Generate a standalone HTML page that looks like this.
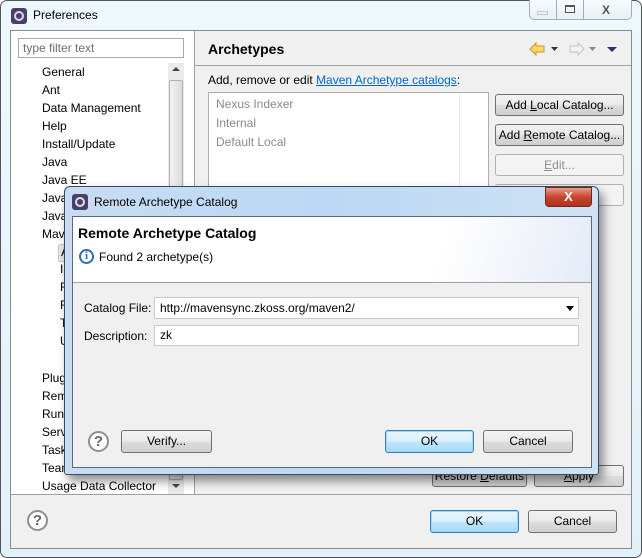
<!DOCTYPE html>
<html><head><style>
*{box-sizing:border-box;margin:0;padding:0}
body{width:642px;height:558px;position:relative;overflow:hidden;background:#fff;font-family:"Liberation Sans",sans-serif;font-size:12px;color:#000}
.a{position:absolute}
.btn{position:absolute;border:1px solid #707070;border-radius:3px;background:linear-gradient(#f2f2f2 0%,#ebebeb 48%,#dddddd 52%,#cfcfcf 100%);text-align:center;line-height:20px;font-size:12px}
.btnd{border-color:#adb2b5;color:#8d8d8d;background:#f4f4f4}
.btnok{border-color:#3c7fb1;background:linear-gradient(#eaf6fd 0%,#d9f0fc 48%,#bee6fd 52%,#a7d9f5 100%);box-shadow:inset 0 0 0 1px #9fd6f3}
.help{position:absolute;width:21px;height:21px;border:2px solid #8a8f98;border-radius:50%;text-align:center;font-weight:bold;font-size:15px;line-height:17px;color:#666;background:#fff}
.ti{position:absolute;left:42px}
.t2{position:absolute;left:60px}
</style></head><body>
<div class="a" style="left:0;top:0;width:642px;height:558px;border:1px solid #555;border-radius:7px;background:linear-gradient(#eef9fd,#e2f1f8)"></div>
<div class="a" style="left:11px;top:8px;width:16px;height:16px;border-radius:3px;background:#4a3f6b"><div class="a" style="left:3px;top:3px;width:10px;height:10px;border-radius:50%;border:2px solid #ddd"></div></div>
<div class="a" style="left:33px;top:8px;font-size:12px">Preferences</div>
<div class="a" style="left:529px;top:0;width:103px;height:20px;border:1px solid #a0aeb8;border-top:none;border-radius:0 0 5px 5px;background:linear-gradient(#f8fcfe,#e6f0f6)"></div>
<div class="a" style="left:556px;top:0;width:1px;height:20px;background:#a0aeb8"></div>
<div class="a" style="left:583px;top:0;width:1px;height:20px;background:#a0aeb8"></div>
<div class="a" style="left:537px;top:11px;width:11px;height:4px;border:1px solid #bcc;"></div>
<div class="a" style="left:565px;top:5px;width:10px;height:8px;border:1px solid #555;border-top-width:2px"></div>
<div class="a" style="left:602px;top:3px;font-size:12px;font-weight:bold;color:#555">X</div>
<div class="a" style="left:10px;top:30px;width:622px;height:519px;border:1px solid #8b8b8b;background:#f0f0f0"></div>
<div class="a" style="left:11px;top:31px;width:183px;height:463px;background:#fff"></div>
<div class="a" style="left:194px;top:31px;width:1px;height:463px;background:#a0a0a0"></div>
<div class="a" style="left:18px;top:38px;width:166px;height:20px;border:1px solid #a5acb5;background:#fff;color:#6d6d6d;padding-left:4px;line-height:18px">type filter text</div>
<div class="a" style="left:168px;top:63px;width:16px;height:431px;background:#eaeaea"></div>
<div class="a" style="left:169px;top:80px;width:14px;height:400px;border:1px solid #b0b0b0;border-radius:2px;background:linear-gradient(90deg,#f2f2f2,#dcdcdc)"></div>
<div class="a" style="left:172px;top:67px;width:0;height:0;border:4px solid transparent;border-bottom:4px solid #444;border-top:none"></div>
<div class="a" style="left:172px;top:484px;width:0;height:0;border:4px solid transparent;border-top:4px solid #444;border-bottom:none"></div>
<div class="ti" style="top:65px">General</div>
<div class="ti" style="top:83px">Ant</div>
<div class="ti" style="top:101px">Data Management</div>
<div class="ti" style="top:119px">Help</div>
<div class="ti" style="top:137px">Install/Update</div>
<div class="ti" style="top:155px">Java</div>
<div class="ti" style="top:173px">Java EE</div>
<div class="ti" style="top:191px">Java</div>
<div class="ti" style="top:209px">Java</div>
<div class="ti" style="top:227px">Maven</div>
<div class="a" style="left:58px;top:244px;width:20px;height:18px;border:1px solid #ccc;border-radius:2px;background:#e8e8e8;padding-left:2px">A</div>
<div class="t2" style="top:262px">I</div>
<div class="t2" style="top:280px">R</div>
<div class="t2" style="top:298px">R</div>
<div class="t2" style="top:316px">T</div>
<div class="t2" style="top:334px">U</div>
<div class="ti" style="top:371px">Plug</div>
<div class="ti" style="top:389px">Remo</div>
<div class="ti" style="top:407px">Run/</div>
<div class="ti" style="top:425px">Serv</div>
<div class="ti" style="top:443px">Task</div>
<div class="ti" style="top:461px">Team</div>
<div class="ti" style="top:479px">Usage Data Collector</div>
<div class="a" style="left:208px;top:41px;font-size:14px;font-weight:bold">Archetypes</div>
<svg class="a" style="left:528px;top:42px" width="96" height="14"><path d="M2 7 L8 1 V4 H16 V10 H8 V13 Z" fill="#fbd76a" stroke="#c9962a"/><path d="M23 5 h7 l-3.5 4z" fill="#333"/><path d="M56 7 L50 1 V4 H42 V10 H50 V13 Z" fill="#f4f4f4" stroke="#c0c0c0"/><path d="M61 5 h7 l-3.5 4z" fill="#888"/><path d="M79 5 h10 l-5 5z" fill="#2d2f6a"/></svg>
<div class="a" style="left:195px;top:65px;width:436px;height:1px;background:#a0a0a0"></div>
<div class="a" style="left:208px;top:73px">Add, remove or edit <span style="color:#0066cc;text-decoration:underline">Maven Archetype catalogs</span>:</div>
<div class="a" style="left:208px;top:92px;width:281px;height:380px;border:1px solid #adadad;background:#fff"></div>
<div class="a" style="left:459px;top:93px;width:1px;height:378px;background:#e4ecf5"></div>
<div class="a" style="left:216px;top:97px;color:#8a8a8a">Nexus Indexer</div>
<div class="a" style="left:216px;top:116px;color:#8a8a8a">Internal</div>
<div class="a" style="left:216px;top:135px;color:#8a8a8a">Default Local</div>
<div class="btn" style="left:495px;top:94px;width:129px;height:22px">Add <u>L</u>ocal Catalog...</div>
<div class="btn" style="left:495px;top:124px;width:129px;height:22px">Add <u>R</u>emote Catalog...</div>
<div class="btn btnd" style="left:495px;top:154px;width:129px;height:22px"><u>E</u>dit...</div>
<div class="btn btnd" style="left:495px;top:184px;width:129px;height:22px"></div>
<div class="btn" style="left:432px;top:465px;width:95px;height:22px">Restore <u>D</u>efaults</div>
<div class="btn" style="left:534px;top:465px;width:90px;height:22px"><u>A</u>pply</div>
<div class="a" style="left:11px;top:494px;width:620px;height:1px;background:#a0a0a0"></div>
<div class="help" style="left:27px;top:510px">?</div>
<div class="btn btnok" style="left:430px;top:510px;width:89px;height:23px;line-height:21px">OK</div>
<div class="btn" style="left:528px;top:510px;width:89px;height:23px;line-height:21px">Cancel</div>
<div class="a" style="left:64px;top:186px;width:535px;height:289px;border:1px solid #3a4a5a;border-radius:6px 6px 3px 3px;background:linear-gradient(90deg,#c8ddf3,#bcd8f4 50%,#cfe2f3);box-shadow:4px 6px 10px rgba(0,0,0,.45)"></div>
<div class="a" style="left:72px;top:194px;width:16px;height:16px;border-radius:3px;background:#4a3f6b"><div class="a" style="left:3px;top:3px;width:10px;height:10px;border-radius:50%;border:2px solid #ddd"></div></div>
<div class="a" style="left:94px;top:195px">Remote Archetype Catalog</div>
<div class="a" style="left:545px;top:187px;width:47px;height:20px;border:1px solid #6b2a20;border-radius:0 0 4px 4px;background:linear-gradient(#e8a08f,#c8452e 50%,#b0301c);color:#fff;font-weight:bold;text-align:center;font-size:13px;line-height:18px">X</div>
<div class="a" style="left:72px;top:216px;width:520px;height:252px;border:1px solid #5a6a7a;background:#f0f0f0"></div>
<div class="a" style="left:73px;top:217px;width:518px;height:66px;background:linear-gradient(110deg,#fff 70%,#e4ebf7);border-bottom:1px solid #a0a0a0"></div>
<div class="a" style="left:78px;top:225px;font-size:14px;font-weight:bold">Remote Archetype Catalog</div>
<div class="a" style="left:79px;top:249px;width:15px;height:15px;border:2px solid #2b6fb5;border-radius:50%;color:#2b6fb5;font-weight:bold;font-size:11px;text-align:center;line-height:11px;font-family:'Liberation Serif',serif">i</div>
<div class="a" style="left:99px;top:250px">Found 2 archetype(s)</div>
<div class="a" style="left:84px;top:301px">Catalog File:</div>
<div class="a" style="left:154px;top:297px;width:425px;height:22px;border:1px solid #c9c9c9;background:#fff;padding-left:5px;line-height:20px">http://mavensync.zkoss.org/maven2/</div>
<div class="a" style="left:566px;top:306px;border:4px solid transparent;border-top:5px solid #000;border-bottom:none"></div>
<div class="a" style="left:84px;top:329px">Description:</div>
<div class="a" style="left:154px;top:325px;width:425px;height:21px;border:1px solid #c9c9c9;background:#fff;padding-left:5px;line-height:19px">zk</div>
<div class="help" style="left:88px;top:431px">?</div>
<div class="btn" style="left:121px;top:430px;width:91px;height:23px;line-height:21px">Verify...</div>
<div class="btn btnok" style="left:385px;top:430px;width:89px;height:23px;line-height:21px">OK</div>
<div class="btn" style="left:483px;top:430px;width:90px;height:23px;line-height:21px">Cancel</div>
</body></html>
